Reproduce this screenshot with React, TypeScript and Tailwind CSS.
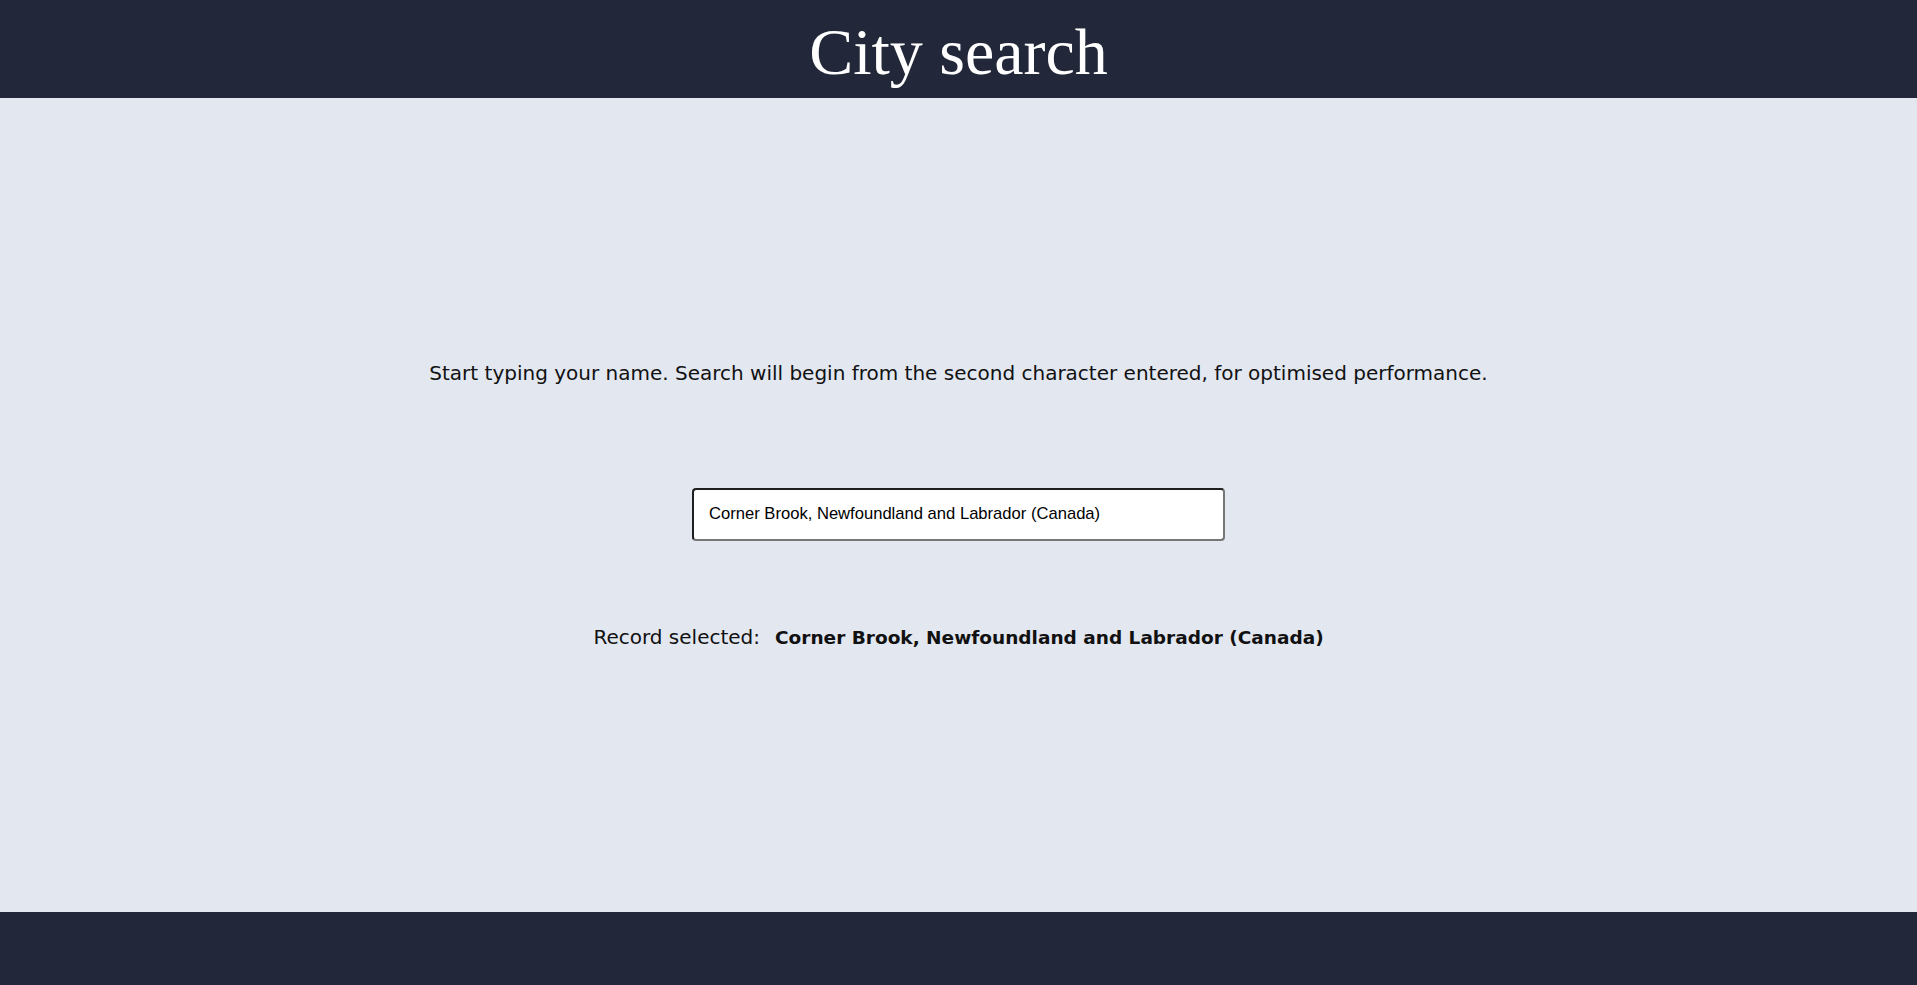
import React from "react";

export default function App() {
  const city = "Corner Brook, Newfoundland and Labrador (Canada)";
  return (
    <div className="flex h-[985px] flex-col bg-[#e2e7f0]">
      <header className="flex h-[98px] shrink-0 items-center justify-center bg-[#222839]">
        <h1 className="pt-[6px] text-[66px] leading-none text-white font-['Liberation_Serif',serif]">
          City search
        </h1>
      </header>
      <main className="flex flex-1 flex-col items-center justify-center text-[#111] font-['DejaVu_Sans',sans-serif]">
        <p className="text-[20px] leading-[24px]">
          Start typing your name. Search will begin from the second character entered, for optimised performance.
        </p>
        <input
          type="text"
          defaultValue={city}
          className="mt-[103px] h-[53px] w-[533px] rounded-[4px] border-2 border-t-[#1f1f1f] border-l-[#1f1f1f] border-b-[#767676] border-r-[#767676] bg-white px-[15px] text-[16.6px] text-black outline-none font-['Liberation_Sans',Arial,sans-serif]"
        />
        <div className="mt-[84px] flex items-baseline leading-[24px]">
          <span className="text-[20px] font-normal">Record selected:</span>
          <span className="ml-[15px] text-[18.5px] font-bold">{city}</span>
        </div>
      </main>
      <footer className="h-[73px] shrink-0 bg-[#222839]" />
    </div>
  );
}
